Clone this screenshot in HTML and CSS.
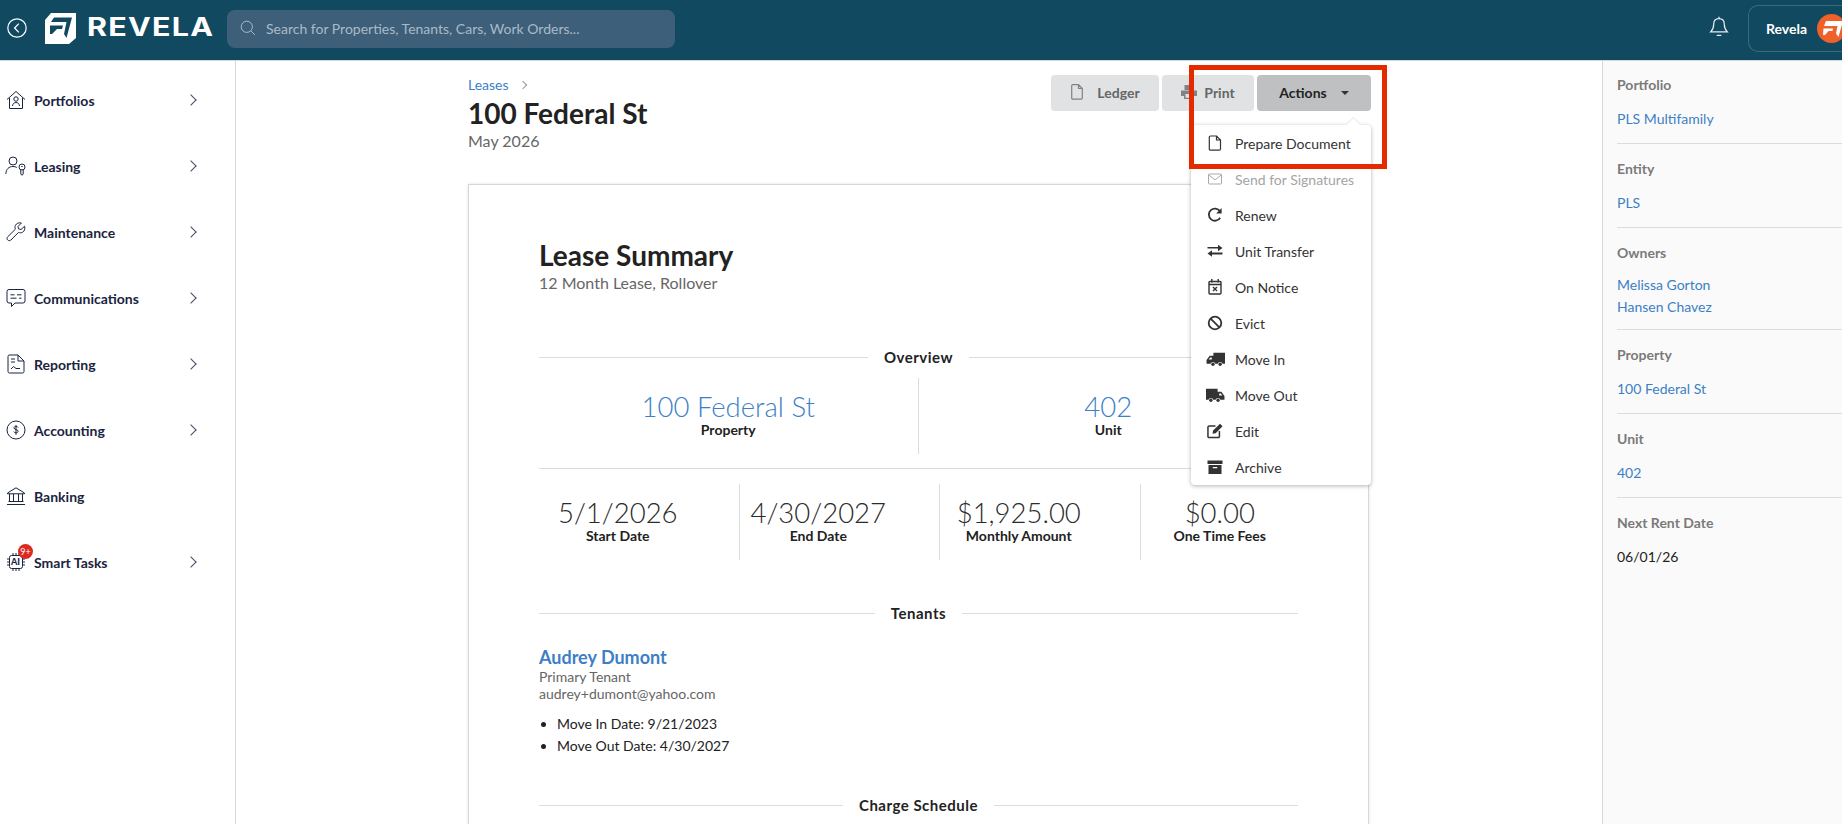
FILE: index.html
```html
<!DOCTYPE html>
<html lang="en">
<head>
  <meta charset="UTF-8">
  <title>100 Federal St - Revela</title>
  <link rel="stylesheet" href="styles.css">
</head>
<body>
  <header class="topbar">
    <svg class="back-icon" viewBox="0 0 20 20" fill="none" stroke="#fff" stroke-width="1.2"><circle cx="10" cy="10" r="9.2"/><path d="M11.800 5.600 7.600 10l4.200 4.400" stroke-width="1.300"/></svg>
    <svg class="logo-mark" viewBox="0 0 31 31"><path fill="#fff" fill-rule="evenodd" d="M6 0H31V25L24 31H0V7ZM9 4.500H27L21.500 25 19 21 21.500 9H6ZM5 12.500H18L17 16H12L7 21H5Z"/></svg>
    <span class="logo-text">REVELA</span>
    <div class="search">
      <svg viewBox="0 0 16 16" fill="none" stroke="#a9bac8" stroke-width="1"><circle cx="6.800" cy="6.800" r="5.600"/><path d="m11 11 4 4"/></svg>
      <span>Search for Properties, Tenants, Cars, Work Orders...</span>
    </div>
    <div class="topbar-right">
      <svg class="bell" viewBox="0 0 20 22" fill="none" stroke="#e8eef2" stroke-width="1.200"><path d="M10 2.600c-3.400 0-5.300 2.500-5.300 5.600 0 3.600-.9 5.500-3 7.600h16.600c-2.100-2.100-3-4-3-7.600 0-3.100-1.900-5.600-5.300-5.600Z"/><path d="M10 1v1.600M8.200 19.400h3.600" stroke-linecap="round"/></svg>
      <div class="account">
        <span>Revela</span>
        <svg class="avatar" viewBox="0 0 29 29"><circle cx="14.500" cy="14.500" r="14.500" fill="#f0612a"/><path fill="#fff" fill-rule="evenodd" d="M9 7H26L21.500 23 19 19.500 20.500 12H7ZM6.500 14.500H16L15.500 17H11.500L8 21H6Z"/></svg>
      </div>
    </div>
  </header>

  <div class="layout">
    <nav class="sidebar">
      <a class="nav-item">
        <svg viewBox="0 0 20 20"><path d="M1 9.500 10 1.500l9 8M3.500 8v10.500h13V8"/><circle cx="10" cy="9" r="2.200"/><path d="M6.500 16c.3-2.500 1.800-3.500 3.500-3.500s3.200 1 3.500 3.500"/></svg>
        <span>Portfolios</span><i class="chev"></i>
      </a>
      <a class="nav-item">
        <svg class="nav-wide" viewBox="0 0 22 20"><circle cx="8" cy="5" r="4"/><path d="M.8 18c.4-5 3-7.500 7.200-7.500 1.500 0 2.800.3 3.800 1"/><circle cx="17" cy="11" r="3"/><path d="M15.800 13.800V18l1.200 1.300 1.200-1.300v-4.200"/><path d="M16.300 10.500h1.400"/></svg>
        <span>Leasing</span><i class="chev"></i>
      </a>
      <a class="nav-item">
        <svg viewBox="0 0 20 20"><path d="M18.600 4.200 15 7.500l-2.400-.6-.6-2.400L15.400 1c-2.500-.7-5 .3-6 2.400-.6 1.300-.5 2.600 0 3.800L1.700 14.800c-.9 1-.9 2.300 0 3.200.9.900 2.300.9 3.200 0l7.600-7.600c1.200.5 2.600.5 3.800 0 2.100-1 3.100-3.600 2.300-6.200Z"/></svg>
        <span>Maintenance</span><i class="chev"></i>
      </a>
      <a class="nav-item">
        <svg viewBox="0 0 20 20"><path d="M3 1.500h14a2 2 0 0 1 2 2v9.500a2 2 0 0 1-2 2H9l-3.500 3.500V15H3a2 2 0 0 1-2-2V3.500a2 2 0 0 1 2-2Z"/><path d="M4.500 6.800h4M11 6.800h4.500M4.500 10.200h6M13 10.200h2.500"/></svg>
        <span>Communications</span><i class="chev"></i>
      </a>
      <a class="nav-item">
        <svg viewBox="0 0 20 20"><path d="M3 1h9l6 6v10.500a1.500 1.500 0 0 1-1.500 1.500h-13A1.500 1.500 0 0 1 2 17.500V2.500A1.500 1.500 0 0 1 3 1ZM12 1v6h6"/><path d="M5 5h4M5 8h4M5 15l2.500-2.500 2.500 2h4"/></svg>
        <span>Reporting</span><i class="chev"></i>
      </a>
      <a class="nav-item">
        <svg viewBox="0 0 20 20"><circle cx="10" cy="10" r="9"/><path d="M12 7.600c-.4-.9-1.100-1.300-2-1.300-1.100 0-2 .6-2 1.600 0 2.200 4.100 1.100 4.100 3.300 0 1-.9 1.600-2.100 1.600-1 0-1.800-.4-2.200-1.200M10 5.200v9.600"/></svg>
        <span>Accounting</span><i class="chev"></i>
      </a>
      <a class="nav-item">
        <svg viewBox="0 0 20 20"><path d="M1.500 7 10 1.800 18.500 7v.8h-17ZM3.500 7.800v7.700M7.500 7.800v7.700M12.500 7.800v7.700M16.500 7.800v7.700M2.500 15.500h15M1 18.500h18"/></svg>
        <span>Banking</span><i class="chev hidden"></i>
      </a>
      <a class="nav-item">
        <div class="ai-icon">
          <svg viewBox="0 0 20 20"><rect x="3.500" y="3.500" width="13" height="13" rx="2"/><path d="M1 7h2.500M1 10h2.500M1 13h2.500M16.500 7H19M16.500 10H19M16.500 13H19M7 1v2.500M10 1v2.500M13 1v2.500M7 16.500V19M10 16.500V19M13 16.500V19"/></svg>
          <b class="ai-label">AI</b>
          <span class="badge">9+</span>
        </div>
        <span>Smart Tasks</span><i class="chev"></i>
      </a>
    </nav>

    <main class="main">
      <div class="content">
        <div class="page-head">
          <div class="page-title">
            <div class="crumb"><a>Leases</a><i class="crumb-chev"></i></div>
            <h1>100 Federal St</h1>
            <div class="period">May 2026</div>
          </div>
          <div class="page-actions">
            <button class="btn btn-ledger">
              <svg class="btn-icon" viewBox="0 0 12 16" fill="none" stroke="#808285" stroke-width="1.200"><path d="M1.500.7h6l3.800 3.800v9.300a1.300 1.300 0 0 1-1.300 1.300H1.500A1 1 0 0 1 .7 14V1.500A1 1 0 0 1 1.500.7ZM7.500.7v3.800h3.800"/></svg>
              Ledger
            </button>
            <button class="btn btn-print">
              <svg class="btn-icon" viewBox="0 0 16 16" fill="#808285"><path d="M3.500 1h9v5h-9ZM0 6.500h16V12h-3v3H3v-3H0ZM4.500 10v3.800h7V10Z"/></svg>
              Print
            </button>
            <div class="actions-wrap">
              <button class="btn btn-actions">Actions <i class="caret"></i></button>
              <ul class="menu">
                <li><svg viewBox="0 0 14 16" fill="none" stroke="#333" stroke-width="1.200"><path d="M2.500 1h6l4 4v9a1.200 1.200 0 0 1-1.200 1.200H2.500A1.200 1.200 0 0 1 1.300 14V2.200A1.200 1.200 0 0 1 2.500 1ZM8.500 1v4h4"/></svg>Prepare Document</li>
                <li class="disabled"><svg viewBox="0 0 14 16" fill="none" stroke="#aaa" stroke-width="1"><rect x=".5" y="3" width="13" height="10" rx="1"/><path d="m.8 4 6.200 4.800L13.200 4"/></svg>Send for Signatures</li>
                <li><svg viewBox="0 0 16 16" fill="none" stroke="#333" stroke-width="1.800"><path d="M13.200 10.800A6.100 6.100 0 1 1 13 4.200"/><path fill="#333" stroke="none" d="M14.600 1v5.500H9.100Z"/></svg>Renew</li>
                <li><svg viewBox="0 0 16 16" fill="#333"><path d="M.5 4.500h10.500V2.300l4.500 3.200-4.500 3.200V6H.5ZM15.500 10H5V7.800L.5 11 5 14.200V12h10.500Z" transform="translate(0 -.5)"/></svg>Unit Transfer</li>
                <li><svg viewBox="0 0 14 16" fill="none" stroke="#333" stroke-width="1.400"><rect x="1" y="2.500" width="12" height="12.500" rx="1"/><path d="M3.800 0v3.500M10.200 0v3.500M1 5.500h12M5 8l4 4M9 8l-4 4"/></svg>On Notice</li>
                <li><svg viewBox="0 0 16 16" fill="none" stroke="#333" stroke-width="1.800"><circle cx="8" cy="8" r="6.300"/><path d="m3.600 3.600 8.800 8.800"/></svg>Evict</li>
                <li><svg class="truck" viewBox="0 0 18 16" fill="#333"><path d="M7 2h11v10.500h-2.300a2.400 2.400 0 0 0-4.600 0H8.900a2.400 2.400 0 0 0-4.600 0H.5V9l3-4h3.500ZM2.500 8.500h3v-2H4Z"/><circle cx="6.600" cy="13" r="1.600"/><circle cx="13.400" cy="13" r="1.600"/></svg>Move In</li>
                <li><svg class="truck" viewBox="0 0 18 16" fill="#333"><path d="M11 2H0v10.500h2.300a2.400 2.400 0 0 1 4.600 0h2.200a2.400 2.400 0 0 1 4.600 0h3.800V9l-3-4H11ZM15.500 8.500h-3v-2H14Z"/><circle cx="4.600" cy="13" r="1.600"/><circle cx="11.400" cy="13" r="1.600"/></svg>Move Out</li>
                <li><svg viewBox="0 0 17 16" fill="none" stroke="#333" stroke-width="1.600"><path d="M9 2.800H2.200A1.200 1.200 0 0 0 1 4v9.800A1.200 1.200 0 0 0 2.200 15H12a1.200 1.200 0 0 0 1.200-1.200V8"/><path fill="#333" stroke="none" d="M13.800.2 16.500 3l-7.300 7.300-3.400.7.700-3.400Z"/></svg>Edit</li>
                <li><svg viewBox="0 0 16 16" fill="#333"><path d="M.5 1.500h15v3.500H.5ZM1.500 6h13v9h-13ZM5.800 8v1.300h4.400V8Z" fill-rule="evenodd"/></svg>Archive</li>
              </ul>
              <div class="highlight"></div>
            </div>
          </div>
        </div>

        <section class="card">
          <h2>Lease Summary</h2>
          <div class="card-sub">12 Month Lease, Rollover</div>

          <div class="divider divider-overview"><span>Overview</span></div>
          <div class="stats-top">
            <div class="stat"><a class="stat-value">100 Federal St</a><div class="stat-label">Property</div></div>
            <div class="stat"><a class="stat-value">402</a><div class="stat-label">Unit</div></div>
          </div>
          <div class="stats-bottom">
            <div class="stat"><div class="stat-value">5/1/2026</div><div class="stat-label">Start Date</div></div>
            <div class="stat"><div class="stat-value">4/30/2027</div><div class="stat-label">End Date</div></div>
            <div class="stat"><div class="stat-value">$1,925.00</div><div class="stat-label">Monthly Amount</div></div>
            <div class="stat"><div class="stat-value">$0.00</div><div class="stat-label">One Time Fees</div></div>
          </div>

          <div class="divider"><span>Tenants</span></div>
          <a class="tenant-name">Audrey Dumont</a>
          <div class="tenant-meta">Primary Tenant</div>
          <div class="tenant-meta">audrey+dumont@yahoo.com</div>
          <ul class="tenant-dates">
            <li>Move In Date: 9/21/2023</li>
            <li>Move Out Date: 4/30/2027</li>
          </ul>

          <div class="divider divider-charges"><span>Charge Schedule</span></div>
        </section>
      </div>
    </main>

    <aside class="details">
      <div class="detail"><div class="detail-label">Portfolio</div><a>PLS Multifamily</a></div>
      <div class="detail"><div class="detail-label">Entity</div><a>PLS</a></div>
      <div class="detail detail-owners"><div class="detail-label">Owners</div><a>Melissa Gorton</a><a>Hansen Chavez</a></div>
      <div class="detail"><div class="detail-label">Property</div><a>100 Federal St</a></div>
      <div class="detail"><div class="detail-label">Unit</div><a>402</a></div>
      <div class="detail"><div class="detail-label">Next Rent Date</div><span>06/01/26</span></div>
    </aside>
  </div>
</body>
</html>
```

FILE: styles.css
```css
html, body { margin:0; padding:0; height:100%; overflow:hidden; background:#fff; font-family:Lato,"Open Sans",sans-serif; color:#222; }
body { display:flex; flex-direction:column; }
a { color:#3d7fc6; }

/* top bar */
.topbar { height:60px; flex:none; display:flex; align-items:center; background:#114960; border-bottom:1px solid #d5d8da; }
.back-icon { width:20px; height:20px; margin:-4px 18px 0 7px; flex:none; }
.logo-mark { width:31px; height:31px; flex:none; margin-top:-3px; }
.logo-text { margin:-6px 0 0 11px; width:140px; flex:none; font-family:Inter,sans-serif; font-weight:700; font-size:25px; letter-spacing:1px; color:#fff; transform:scaleX(1.22); transform-origin:left center; }
.search { width:448px; height:38px; margin:-2px 0 0 0; padding-bottom:2px; box-sizing:border-box; display:flex; align-items:center; background:#3e5f79; border-radius:8px; font-size:14px; color:#a9bac8; }
.search svg { width:16px; height:16px; margin:0 10px 0 13px; }
.topbar-right { margin-left:auto; display:flex; align-items:center; }
.bell { width:20px; height:22px; margin:-6px 19px 0 0; }
.account { width:94px; height:47px; margin-top:-3px; box-sizing:border-box; display:flex; align-items:center; padding-left:17px; border:1px solid #3a6a80; border-right:none; border-radius:10px 0 0 10px; color:#fff; font-weight:700; font-size:14px; }
.avatar { width:29px; height:29px; margin-left:10px; flex:none; }

.layout { flex:1; display:flex; min-height:0; }

/* left nav */
.sidebar { width:236px; flex:none; box-sizing:border-box; padding-top:6px; border-right:1px solid #d8d8d8; }
.nav-item { height:66px; display:flex; align-items:center; padding-left:6px; color:#1b2440; font-size:14px; font-weight:700; }
.nav-item > span { width:154px; margin-left:8px; }
.nav-item > svg, .ai-icon svg { width:20px; height:20px; flex:none; fill:none; stroke:#1b2440; stroke-width:1; }
.nav-item > svg.nav-wide { width:22px; margin:0 -1px 0 -1px; }
.chev { width:7px; height:7px; margin-left:-1px; border-top:1px solid #444b60; border-right:1px solid #444b60; transform:rotate(45deg); }
.chev.hidden { visibility:hidden; }
.ai-icon { position:relative; width:20px; height:20px; flex:none; }
.ai-label { position:absolute; left:5px; top:4px; font-size:9px; line-height:12px; }
.badge { position:absolute; left:12px; top:-8px; width:15px; height:15px; border-radius:50%; background:#dc2a23; color:#fff; font-size:9px; font-weight:400; line-height:15px; text-align:center; }

/* main column */
.main { flex:1; min-width:0; padding-right:1px; }
.content { width:901px; margin:0 auto; }
.page-head { display:flex; justify-content:space-between; height:123px; }
.page-title { padding-top:14px; }
.crumb { display:flex; align-items:center; font-size:14px; line-height:19px; }
.crumb-chev { width:5px; height:5px; margin-left:11px; border-top:1px solid #999; border-right:1px solid #999; transform:rotate(45deg); }
h1 { margin:2px 0 0; font-size:28px; line-height:34px; font-weight:700; color:#222; }
.period { font-size:16px; line-height:22px; color:#666; }
.page-actions { display:flex; gap:3px; padding-top:14px; align-items:flex-start; margin-right:-2px; }
.btn { height:36px; border:none; border-radius:4px; background:#e1e2e4; color:#666; font-family:inherit; font-size:14px; font-weight:700; display:flex; align-items:center; justify-content:center; padding:0 0 2px; }
.btn-ledger { width:108px; }
.btn-print { width:92px; }
.btn-icon { height:16px; width:14px; margin-right:13px; flex:none; }
.btn-print .btn-icon { width:16px; margin-right:7px; }
.btn-actions { width:114px; background:#bfc0c2; color:#222; }
.caret { margin-left:14px; margin-top:1px; border-left:4px solid transparent; border-right:4px solid transparent; border-top:4px solid #333; }
.actions-wrap { position:relative; }

/* dropdown */
.menu { position:absolute; top:50px; left:-66px; width:180px; box-sizing:border-box; margin:0; padding:0; list-style:none; background:#fff; border-radius:4px; box-shadow:0 1px 4px rgba(0,0,0,.3); z-index:5; }
.menu::before { content:""; position:absolute; top:-5px; right:13px; width:9px; height:9px; background:#fff; transform:rotate(45deg); box-shadow:-1px -1px 1px rgba(0,0,0,.08); }
.menu li { height:36px; display:flex; align-items:center; position:relative; font-size:14px; color:#333; }
.menu li svg { width:16px; height:16px; margin:0 12px 0 16px; flex:none; }
.menu li svg.truck { width:19px; height:18px; margin:0 10px 0 15px; }
.menu li.disabled { color:#a5a5a5; }
.highlight { position:absolute; top:-10px; left:-68px; width:198px; height:104px; box-sizing:border-box; border:5px solid #e62a00; z-index:6; pointer-events:none; }

/* lease card */
.card { box-sizing:border-box; height:640px; padding:52px 70px 0; background:#fff; border:1px solid #d8d8d8; border-bottom:none; box-shadow:0 0 3px rgba(0,0,0,.12); }
h2 { margin:0; font-size:28px; line-height:36px; font-weight:700; color:#222; }
.card-sub { font-size:16px; line-height:20px; margin-top:0; color:#666; }
.divider { display:flex; align-items:center; gap:16px; font-size:15px; font-weight:700; letter-spacing:.5px; line-height:20px; color:#222; margin-top:43px; }
.divider::before, .divider::after { content:""; flex:1; height:1px; background:#dcdcdc; }
.divider-overview { margin-top:54px; }
.divider-charges { margin-top:38px; }
.stats-top { display:grid; grid-template-columns:1fr 1fr; margin-top:11px; height:90px; border-bottom:1px solid #dcdcdc; }
.stats-top .stat { height:76px; padding-top:12px; box-sizing:border-box; text-align:center; }
.stats-top .stat:first-child { border-right:1px solid #dcdcdc; }
.stats-top .stat-label { margin-top:-3px; }
.stats-bottom { display:grid; grid-template-columns:repeat(4,200.5px); margin:15px -42px 0 0; }
.stats-bottom .stat { height:76px; padding:12px 42px 0 0; box-sizing:border-box; text-align:center; border-right:1px solid #dcdcdc; }
.stats-bottom .stat:last-child { border-right:none; }
.stats-bottom .stat-label { margin-top:-3px; }
.stat-value { display:block; font-size:27.500px; line-height:34px; font-weight:300; color:#2b2b2b; }
a.stat-value { color:#3d7fc6; }
.stat-label { font-size:14px; line-height:18px; font-weight:700; color:#222; }
.tenant-name { display:block; margin-top:24px; font-size:18px; line-height:21px; font-weight:700; }
.tenant-meta { font-size:14px; line-height:17px; color:#666; }
.tenant-dates { margin:11px 0 0; padding:0 0 0 18px; font-size:14px; line-height:22px; color:#222; }

/* right details */
.details { width:240px; flex:none; box-sizing:border-box; background:#fafafa; border-left:1px solid #d8d8d8; padding:14px 0 0 14px; font-size:14px; }
.detail { padding-bottom:14px; margin-bottom:15px; border-bottom:1px solid #dcdcdc; }
.detail:last-child { border-bottom:none; }
.detail-label { font-weight:700; color:#7a7a7a; line-height:20px; margin-bottom:14px; }
.detail a, .detail span { display:block; line-height:20px; }
.detail span { color:#222; }
.detail-owners { padding-bottom:12px; }
.detail-owners .detail-label { margin-bottom:12px; }
.detail-owners a + a { margin-top:2px; }
```
